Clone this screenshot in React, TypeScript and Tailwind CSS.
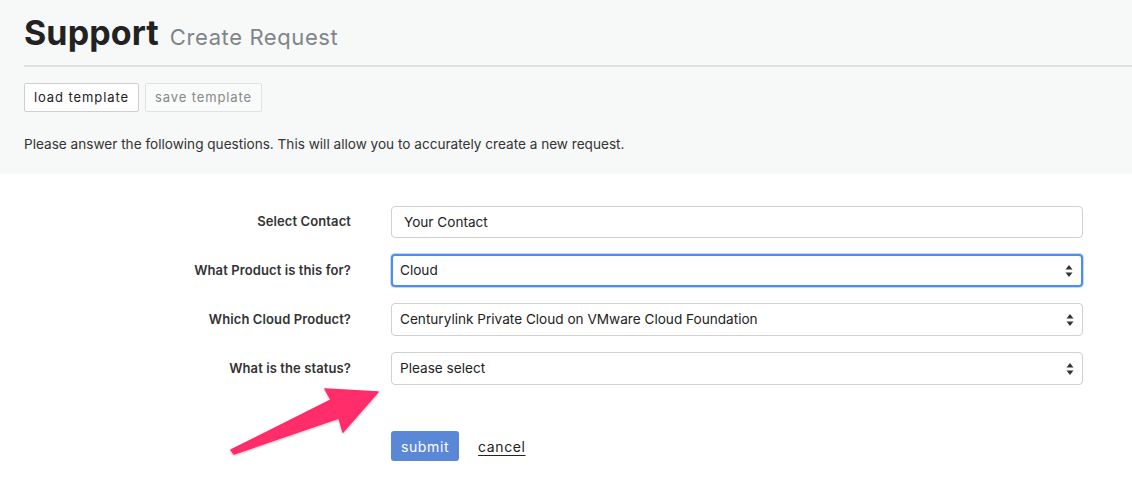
import React from "react";

function Arrows() {
  return (
    <svg width="8" height="13" viewBox="0 0 8 13" className="absolute right-[8px] top-1/2 -translate-y-1/2">
      <path d="M4 0.5 L7.5 5 L0.5 5 Z" fill="#333" />
      <path d="M4 12.5 L7.5 8 L0.5 8 Z" fill="#333" />
    </svg>
  );
}

function Row({ label, children }: { label: string; children: React.ReactNode }) {
  return (
    <div className="flex items-center">
      <div className="w-[351px] text-right text-[13px] font-semibold tracking-[0.1px] text-[#333]">{label}</div>
      <div className="ml-[40px] w-[692px]">{children}</div>
    </div>
  );
}

function Select({ value, focused }: { value: string; focused?: boolean }) {
  return (
    <div
      className={
        focused
          ? "relative flex h-[33px] items-center rounded-[4px] border-[2px] border-[#4a8ef0] bg-white pl-[7px] text-[13.6px] text-[#222] shadow-[0_0_0_1px_rgba(74,142,240,0.35)]"
          : "relative flex h-[33px] items-center rounded-[4px] border border-[#d0d0d0] bg-white pl-[8px] text-[13.6px] text-[#222]"
      }
    >
      {value}
      <Arrows />
    </div>
  );
}

export default function App() {
  return (
    <div className="relative h-[504px] w-[1132px] overflow-hidden bg-white font-['Inter','Noto_Sans',sans-serif]">
      <div className="h-[174px] bg-[#f7f8f8] pl-6">
        <div className="flex items-baseline pt-[10px]">
          <span className="text-[34px] font-bold leading-[46px] text-[#222] tracking-[0.1px]">Support</span>
          <span className="ml-[11px] text-[22px] tracking-[0.6px] text-[#80858a]">Create Request</span>
        </div>
        <div className="mt-[9px] h-[2px] bg-[#dfe1e5]" />
        <div className="mt-[16px] flex gap-[6px]">
          <button className="h-[29px] rounded-[2px] border border-[#cfcfcf] bg-white px-[9px] text-[13px] tracking-[0.9px] text-[#222]">
            load template
          </button>
          <button className="h-[29px] rounded-[2px] border border-[#e2e2e2] bg-[#f9fafa] px-[9px] text-[13px] tracking-[0.9px] text-[#888]">
            save template
          </button>
        </div>
        <p className="mt-[22px] text-[13.6px] text-[#333]">
          Please answer the following questions. This will allow you to accurately create a new request.
        </p>
      </div>
      <div className="flex flex-col gap-[16px] pt-[32px]">
        <Row label="Select Contact">
          <div className="flex h-[32px] items-center rounded-[4px] border border-[#d0d0d0] bg-white pl-[12px] text-[13.6px] text-[#222]">
            Your Contact
          </div>
        </Row>
        <Row label="What Product is this for?">
          <Select value="Cloud" focused />
        </Row>
        <Row label="Which Cloud Product?">
          <Select value="Centurylink Private Cloud on VMware Cloud Foundation" />
        </Row>
        <Row label="What is the status?">
          <Select value="Please select" />
        </Row>
      </div>
      <div className="ml-[391px] mt-[46px] flex items-center gap-[19px]">
        <button className="h-[30px] rounded-[3px] bg-[#5b88d6] px-[10px] text-[14px] tracking-[0.6px] text-white">
          submit
        </button>
        <span className="text-[14px] tracking-[0.6px] text-[#222] underline underline-offset-[3px]">cancel</span>
      </div>
      <svg className="absolute left-0 top-0" width="1132" height="504" viewBox="0 0 1132 504">
        <defs>
          <filter id="sh" x="-20%" y="-20%" width="140%" height="140%">
            <feDropShadow dx="0" dy="1" stdDeviation="1" floodColor="#000" floodOpacity="0.25" />
          </filter>
        </defs>
        <path
          d="M231 450 L331 400 L325 389 L378 392 L343 432 L339 418 L234 454 Z"
          fill="#ff2d6b"
          stroke="#ff2d6b"
          strokeWidth="1.5"
          strokeLinejoin="round"
          filter="url(#sh)"
        />
      </svg>
    </div>
  );
}
